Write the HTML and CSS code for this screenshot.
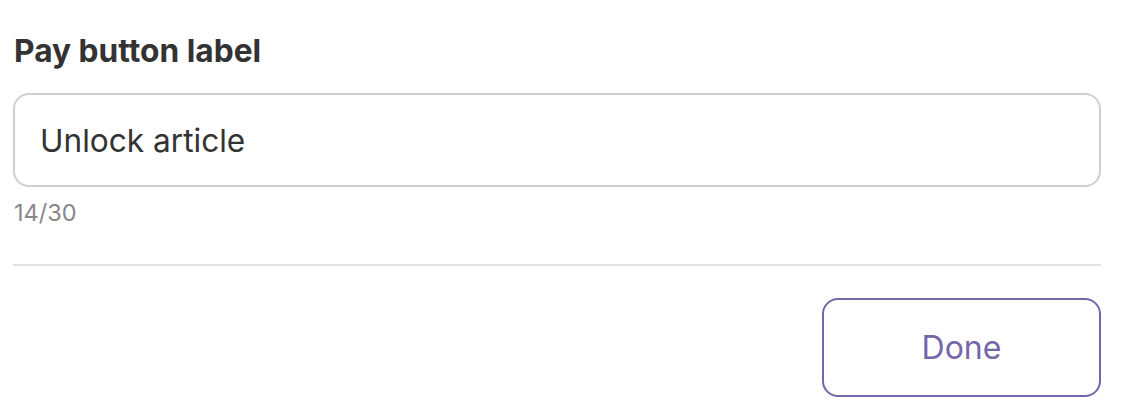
FILE: index.html
```html
<!DOCTYPE html>
<html>
<head>
<meta charset="utf-8">
<link rel="stylesheet" href="styles.css">
</head>
<body>
<div class="panel">
  <label class="field-label">Pay button label</label>
  <div class="input-box">Unlock article</div>
  <div class="counter">14/30</div>
  <hr class="divider">
  <div class="actions">
    <button class="btn-done">Done</button>
  </div>
</div>
</body>
</html>
```
FILE: styles.css
```css
html, body {
  margin: 0;
  padding: 0;
  background: #fff;
}
body {
  font-family: Inter, "Noto Sans", sans-serif;
  color: #333;
}
.panel {
  width: 1088px;
  padding: 32px 0 0 13px;
  display: flex;
  flex-direction: column;
}
.field-label {
  font-size: 31.7px;
  font-weight: 700;
  line-height: 38px;
  padding-left: 1px;
  color: #333;
}
.input-box {
  margin-top: 23px;
  height: 94px;
  box-sizing: border-box;
  border: 2px solid #cfcfcf;
  border-radius: 16px;
  display: flex;
  align-items: center;
  padding-left: 25px;
  font-size: 31.6px;
  color: #333;
}
.counter {
  margin-top: 12px;
  font-size: 23.5px;
  line-height: 28px;
  color: #888;
  padding-left: 1px;
}
.divider {
  margin: 37px 0 0;
  border: 0;
  height: 2px;
  background: #e2e2e2;
}
.actions {
  margin-top: 32px;
  display: flex;
  justify-content: flex-end;
}
.btn-done {
  width: 279px;
  height: 99px;
  box-sizing: border-box;
  border: 2px solid #7467a8;
  border-radius: 16px;
  background: #fff;
  color: #7467a8;
  font-family: Inter, "Noto Sans", sans-serif;
  font-size: 32px;
  font-weight: 400;
  padding: 0;
}
```
